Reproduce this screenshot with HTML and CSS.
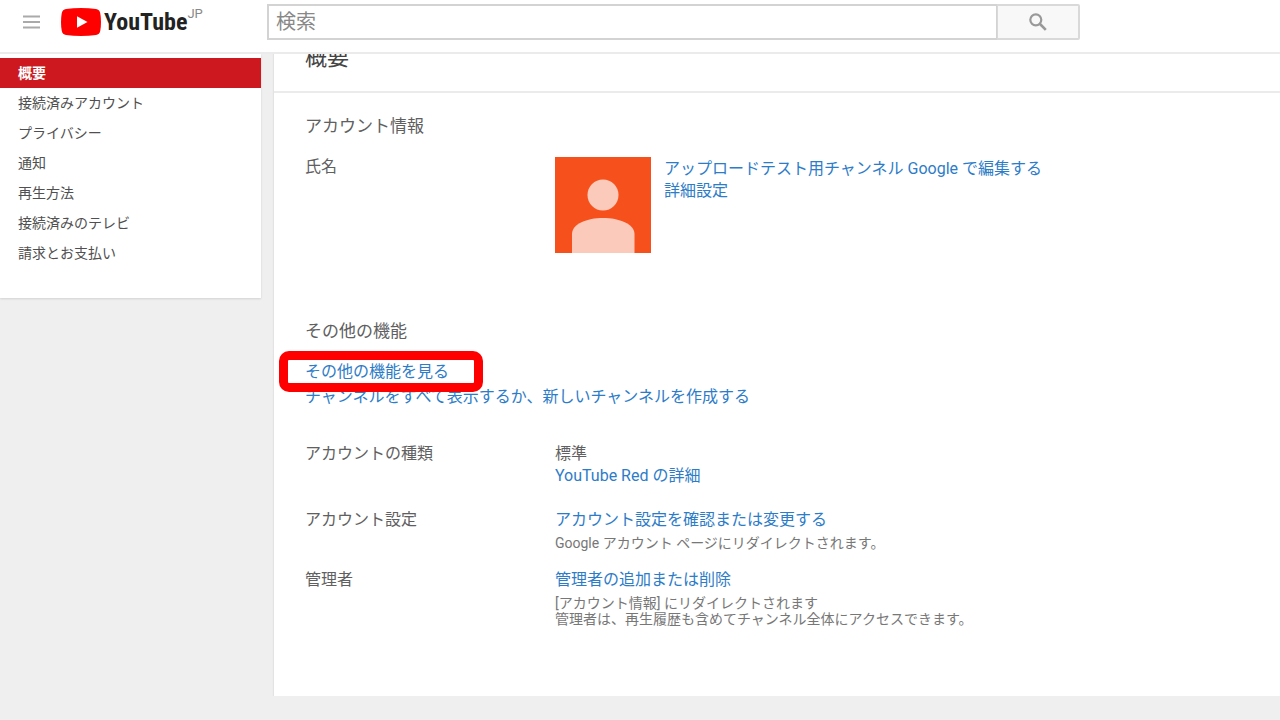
FILE: index.html
```html
<!DOCTYPE html>
<html lang="ja">
<head>
<meta charset="utf-8">
<meta name="viewport" content="width=device-width, initial-scale=1">
<title>概要 - YouTube</title>
<link rel="stylesheet" href="styles.css">
</head>
<body>
<header class="masthead">
  <div class="brand">
    <button class="menu-button" type="button" aria-label="メニュー">
      <svg width="17" height="14" viewBox="0 0 17 14" aria-hidden="true"><path d="M0 1.5h17M0 7h17M0 12.5h17" stroke="#aaa" stroke-width="2"/></svg>
    </button>
    <a class="logo" href="#">
      <svg class="logo-mark" width="40" height="28" viewBox="0 0 40 28" aria-hidden="true"><path d="M5 .9Q12 0 20 0t15 .9q3.500 .5 4.200 4Q40 9 40 14t-.8 9.100q-.7 3.500-4.200 4Q28 28 20 28T5 27.100q-3.500-.5-4.200-4Q0 19 0 14T.8 4.900Q1.500 1.400 5 .9Z" fill="#f00"/><path d="M16 8.300v11.400L26.500 14Z" fill="#fff"/></svg>
      <span class="logo-text">YouTube</span>
      <span class="logo-region">JP</span>
    </a>
  </div>
  <form class="search">
    <input class="search-input" type="text" placeholder="検索" aria-label="検索">
    <button class="search-button" type="button" aria-label="検索">
      <svg width="18" height="18" viewBox="0 0 18 18" fill="none" stroke="#999" aria-hidden="true"><circle cx="6.800" cy="6.800" r="5.500" stroke-width="2.200"/><path d="M11 11l5.800 5.800" stroke-width="2.600"/></svg>
    </button>
  </form>
</header>
<div class="page">
  <nav class="sidebar">
    <a class="nav-item active" href="#">概要</a>
    <a class="nav-item" href="#">接続済みアカウント</a>
    <a class="nav-item" href="#">プライバシー</a>
    <a class="nav-item" href="#">通知</a>
    <a class="nav-item" href="#">再生方法</a>
    <a class="nav-item" href="#">接続済みのテレビ</a>
    <a class="nav-item" href="#">請求とお支払い</a>
  </nav>
  <main class="card">
    <h1 class="title">概要</h1>
    <div class="content">
      <section class="account">
        <h2 class="heading">アカウント情報</h2>
        <div class="row">
          <div class="label">氏名</div>
          <div class="profile">
            <svg class="avatar" width="96" height="96" viewBox="0 0 96 96" role="img" aria-label="プロフィール写真"><path fill="#f6511d" d="M0 0h96v96H0z"/><circle cx="48" cy="38" r="15.500" fill="#fbcaba"/><path d="M17 96V77c0-10 15-16 31-16s31.500 6 31.500 16v19Z" fill="#fbcaba"/></svg>
            <div class="profile-links">
              <a href="#">アップロードテスト用チャンネル</a> <a href="#">Google で編集する</a><br>
              <a href="#">詳細設定</a>
            </div>
          </div>
        </div>
      </section>
      <section class="features">
        <h2 class="heading">その他の機能</h2>
        <div class="feature-links">
          <a class="highlighted" href="#">その他の機能を見る</a>
          <a href="#">チャンネルをすべて表示するか、新しいチャンネルを作成する</a>
        </div>
      </section>
      <section class="settings">
        <div class="row account-type">
          <div class="label">アカウントの種類</div>
          <div class="value">標準<br><a href="#">YouTube Red の詳細</a></div>
        </div>
        <div class="row">
          <div class="label">アカウント設定</div>
          <div class="value"><a href="#">アカウント設定を確認または変更する</a>
            <p class="note">Google アカウント ページにリダイレクトされます。</p></div>
        </div>
        <div class="row">
          <div class="label">管理者</div>
          <div class="value"><a href="#">管理者の追加または削除</a>
            <p class="note">[アカウント情報] にリダイレクトされます<br>管理者は、再生履歴も含めてチャンネル全体にアクセスできます。</p></div>
        </div>
      </section>
    </div>
  </main>
</div>
</body>
</html>
```
FILE: styles.css
```css
* { box-sizing: border-box; }
body {
  margin: 0;
  background: #efefef;
  color: #606060;
  font: 16px/22px Roboto, "Noto Sans CJK JP", sans-serif;
}
a { color: #2d7cc8; text-decoration: none; }
.masthead {
  position: sticky;
  top: 0;
  z-index: 1;
  display: flex;
  align-items: flex-start;
  height: 54px;
  padding: 4px 200px 0 23px;
  background: #fff;
  border-bottom: 2px solid #ebebeb;
}
.brand { display: flex; align-items: center; flex: 0 0 244px; height: 36px; gap: 21px; }
.menu-button { display: flex; padding: 0; border: 0; background: none; }
.logo { display: flex; align-items: center; color: #222; }
.logo-text {
  margin-left: 3px;
  font: bold 24px/32px "Roboto Condensed", "Liberation Sans Narrow", Roboto, sans-serif;
}
.logo-region { align-self: flex-start; font-size: 13px; line-height: 16px; color: #888; }
.search { display: flex; flex: 1; height: 36px; }
.search-input {
  flex: 1;
  min-width: 0;
  padding: 0 7px;
  border: 2px solid #d3d3d3;
  border-right-width: 1px;
  font: 20px/32px Roboto, "Noto Sans CJK JP", sans-serif;
}
.search-input::placeholder { color: #888; }
.search-button {
  display: flex;
  align-items: center;
  justify-content: center;
  width: 83px;
  padding: 0;
  border: 2px solid #d9d9d9;
  border-left-width: 1px;
  border-radius: 0 2px 2px 0;
  background: #f8f8f8;
}
.page { display: flex; align-items: flex-start; gap: 13px; }
.sidebar {
  flex: 0 0 261px;
  padding: 4px 0 30px;
  background: #fff;
  box-shadow: 0 1px 2px rgba(0, 0, 0, .12);
}
.nav-item { display: block; padding: 0 18px; font-size: 14px; line-height: 30px; color: #505050; }
.nav-item.active { background: #cc181e; color: #fff; font-weight: bold; }
.card {
  flex: 1;
  min-width: 0;
  margin-top: -12px;
  background: #fff;
  box-shadow: 0 1px 2px rgba(0, 0, 0, .15);
}
.title {
  margin: 0;
  height: 51px;
  padding: 0 31px;
  border-bottom: 2px solid #ebebeb;
  font-size: 22px;
  line-height: 32px;
  font-weight: normal;
  color: #444;
}
.content { padding: 22px 31px 69px; }
.heading { margin: 0 0 19px; font-size: 17px; line-height: 22px; font-weight: normal; }
.row { display: grid; grid-template-columns: 250px 1fr; }
.profile { display: flex; align-items: flex-start; gap: 13px; }
.avatar { margin-top: 1px; }
.profile-links { padding-top: 2px; }
.features { margin-top: 67px; }
.feature-links { display: flex; flex-direction: column; align-items: flex-start; gap: 3px; }
.highlighted { position: relative; }
.highlighted::after {
  content: "";
  position: absolute;
  inset: -10px -34px -9px -26px;
  border: 9px solid #f00;
  border-radius: 10px;
}
.settings { display: flex; flex-direction: column; gap: 18px; margin-top: 35px; }
.account-type { padding-bottom: 4px; }
.note { margin: 4px 0 0; font-size: 14px; line-height: 16px; color: #777; }
```
